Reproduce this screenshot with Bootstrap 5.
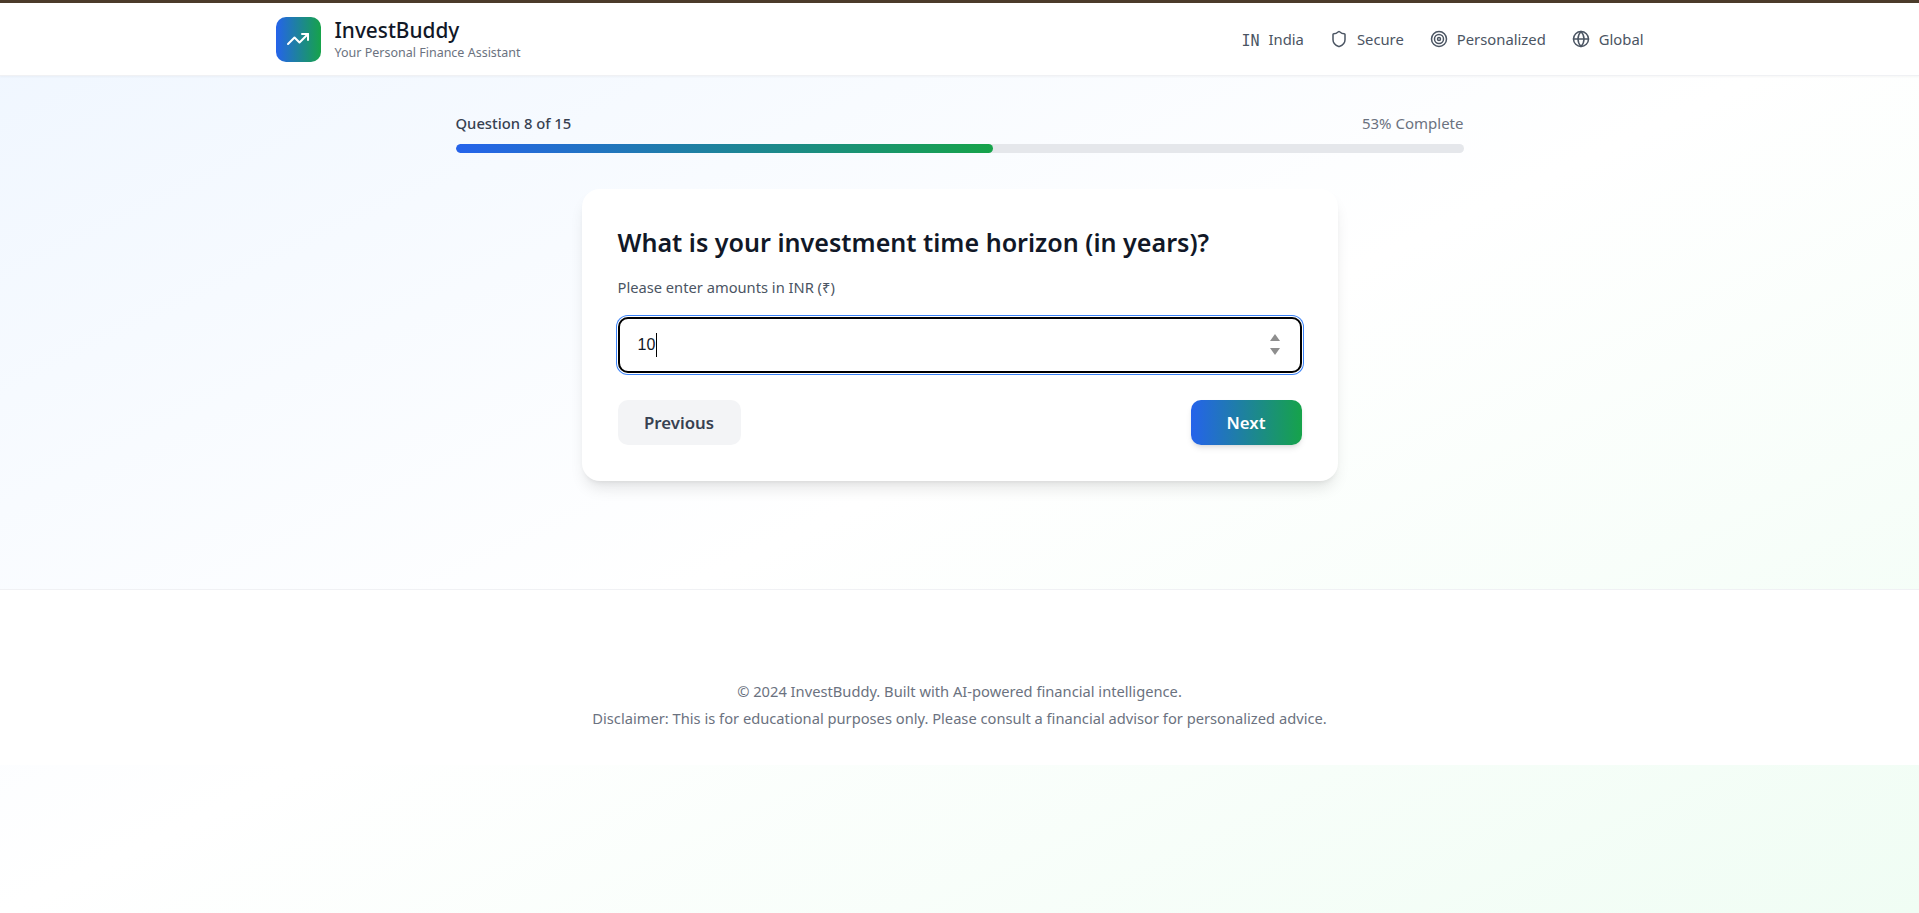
<!DOCTYPE html>
<html lang="en">
<head>
    <meta charset="UTF-8">
    <title>InvestBuddy</title>
    <link href="https://cdn.jsdelivr.net/npm/bootstrap@5.3.2/dist/css/bootstrap.min.css" rel="stylesheet">
    <style>
        html, body { height: 100%; }
        body {
            font-family: "Noto Sans", "Open Sans", sans-serif;
            background: linear-gradient(to bottom right, #eff6ff 0%, #ffffff 50%, #f0fdf4 100%);
            color: #111827;
        }
        .ib-header {
            height: 76px;
            background: #fff;
            border-top: 3px solid #4b3b2a;
            border-bottom: 1px solid #f0f1f4;
            box-shadow: 0 1px 2px rgba(0, 0, 0, .04);
        }
        .ib-wrap { max-width: 1400px; margin: 0 auto; padding: 0 16px; }
        .ib-logo {
            width: 45px;
            height: 45px;
            border-radius: 10px;
            background: linear-gradient(90deg, #2563eb, #16a34a);
            margin-right: 6px;
        }
        .ib-brand { font-size: 20.8px; line-height: 28px; font-weight: 500; color: #111827; }
        .ib-tagline { font-size: 12.5px; line-height: 18px; color: #6b7280; }
        .ib-links { gap: 26px; }
        .ib-navitem { font-size: 14.8px; line-height: 20px; color: #4b5563; gap: 9px; }
        .ib-flag { font-family: "DejaVu Sans Mono", monospace; font-size: 15px; color: #4b5563; padding-top: 3px; }
        .ib-main { height: 513px; padding-top: 35px; }
        .ib-progress-wrap { width: 1008px; margin: 0 auto 36px; }
        .ib-labels { margin-bottom: 9px; }
        .ib-q { font-size: 14.8px; line-height: 24px; font-weight: 500; color: #374151; }
        .ib-pct { font-size: 15px; line-height: 24px; color: #6b7280; }
        .ib-bar { height: 9px; background: #e5e7eb; border-radius: 5px; }
        .ib-bar .progress-bar { background: linear-gradient(90deg, #2563eb, #16a34a); border-radius: 5px; }
        .ib-card {
            width: 756px;
            margin: 0 auto;
            padding: 35px 36px 36px;
            border: 0;
            border-radius: 18px;
            box-shadow: 0 10px 15px -3px rgba(0, 0, 0, .1), 0 4px 6px -4px rgba(0, 0, 0, .1);
        }
        .ib-title { font-size: 25.1px; line-height: 36px; font-weight: 600; color: #111827; margin-bottom: 17px; }
        .ib-hint { font-size: 14.7px; line-height: 20px; color: #4b5563; margin-bottom: 20px; }
        .ib-field { margin-bottom: 27px; }
        .ib-input {
            height: 56px;
            padding: 0 19px;
            font-family: "Liberation Sans", sans-serif;
            font-size: 16px;
            color: #111827;
            border: 1px solid #d1d5db;
            border-radius: 10px;
            box-shadow: 0 0 0 1px #fff, 0 0 0 2px #3b82f6;
            outline: 2px solid #000;
            outline-offset: -2px;
        }
        .ib-caret { position: absolute; left: 38px; top: 16px; width: 1px; height: 24px; background: #000; }
        .ib-spin { position: absolute; right: 21px; top: 14px; }
        .ib-btn { height: 45px; border: 0; border-radius: 10px; font-size: 16.8px; font-weight: 600; }
        .ib-prev { width: 123px; background: #f3f4f6; color: #374151; }
        .ib-next {
            width: 111px;
            background: linear-gradient(90deg, #2563eb, #16a34a);
            color: #fff;
            box-shadow: 0 4px 6px -1px rgba(0, 0, 0, .1), 0 2px 4px -2px rgba(0, 0, 0, .1);
        }
        .ib-footer {
            height: 176px;
            padding-top: 88px;
            background: #fff;
            border-top: 1px solid #f0f1f4;
            font-size: 14.7px;
            line-height: 27px;
            color: #6b7280;
        }
    </style>
</head>
<body>
    <!-- Header -->
    <header class="ib-header">
        <div class="ib-wrap d-flex justify-content-between align-items-center h-100">
            <div class="d-flex align-items-center gap-2">
                <div class="ib-logo d-flex align-items-center justify-content-center">
                    <svg width="24" height="24" viewBox="0 0 24 24" fill="none" stroke="#fff" stroke-width="2" stroke-linecap="round" stroke-linejoin="round"><polyline points="22 7 13.5 15.5 8.5 10.5 2 17"/><polyline points="16 7 22 7 22 13"/></svg>
                </div>
                <div>
                    <div class="ib-brand">InvestBuddy</div>
                    <div class="ib-tagline">Your Personal Finance Assistant</div>
                </div>
            </div>
            <nav class="d-flex align-items-center ib-links">
                <div class="ib-navitem d-flex align-items-center"><span class="ib-flag">IN</span>India</div>
                <div class="ib-navitem d-flex align-items-center">
                    <svg width="18" height="18" viewBox="0 0 24 24" fill="none" stroke="currentColor" stroke-width="2" stroke-linecap="round" stroke-linejoin="round"><path d="M20 13c0 5-3.5 7.5-7.66 8.95a1 1 0 0 1-.67-.01C7.5 20.5 4 18 4 13V6a1 1 0 0 1 1-1c2 0 4.5-1.2 6.24-2.72a1.17 1.17 0 0 1 1.52 0C14.51 3.81 17 5 19 5a1 1 0 0 1 1 1z"/></svg>
                    Secure
                </div>
                <div class="ib-navitem d-flex align-items-center">
                    <svg width="18" height="18" viewBox="0 0 24 24" fill="none" stroke="currentColor" stroke-width="2" stroke-linecap="round" stroke-linejoin="round"><circle cx="12" cy="12" r="10"/><circle cx="12" cy="12" r="6"/><circle cx="12" cy="12" r="2"/></svg>
                    Personalized
                </div>
                <div class="ib-navitem d-flex align-items-center">
                    <svg width="18" height="18" viewBox="0 0 24 24" fill="none" stroke="currentColor" stroke-width="2" stroke-linecap="round" stroke-linejoin="round"><circle cx="12" cy="12" r="10"/><path d="M12 2a14.5 14.5 0 0 0 0 20 14.5 14.5 0 0 0 0-20"/><path d="M2 12h20"/></svg>
                    Global
                </div>
            </nav>
        </div>
    </header>

    <!-- Question -->
    <main class="ib-main">
        <div class="ib-progress-wrap">
            <div class="d-flex justify-content-between ib-labels">
                <span class="ib-q">Question 8 of 15</span>
                <span class="ib-pct">53% Complete</span>
            </div>
            <div class="progress ib-bar">
                <div class="progress-bar" style="width: 53.33%"></div>
            </div>
        </div>

        <div class="card ib-card">
            <h2 class="ib-title">What is your investment time horizon (in years)?</h2>
            <p class="ib-hint">Please enter amounts in INR (₹)</p>
            <div class="ib-field position-relative">
                <input type="text" class="form-control ib-input" value="10">
                <span class="ib-caret"></span>
                <svg class="ib-spin" width="12" height="28" viewBox="0 0 12 28" fill="#8e8e8e"><polygon points="6,3 11,10 1,10"/><polygon points="1,17 11,17 6,24"/></svg>
            </div>
            <div class="d-flex justify-content-between">
                <button type="button" class="btn ib-btn ib-prev">Previous</button>
                <button type="button" class="btn ib-btn ib-next">Next</button>
            </div>
        </div>
    </main>

    <!-- Footer -->
    <footer class="ib-footer text-center">
        <div>© 2024 InvestBuddy. Built with AI-powered financial intelligence.</div>
        <div>Disclaimer: This is for educational purposes only. Please consult a financial advisor for personalized advice.</div>
    </footer>
</body>
</html>
